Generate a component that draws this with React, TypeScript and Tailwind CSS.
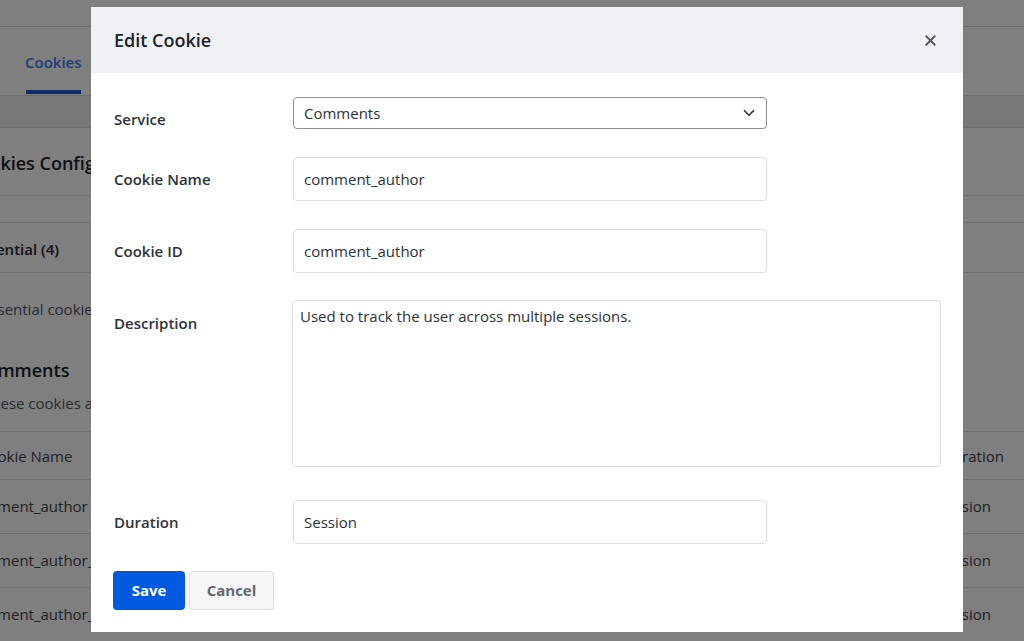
import { X, ChevronDown } from "lucide-react";

const font = { fontFamily: '"Open Sans", "Noto Sans", sans-serif' };

function BgPage() {
  return (
    <div className="w-[1024px] h-[641px] overflow-hidden bg-white text-[#1d2327]">
      <div className="h-[27px] border-b border-[#dcdcde]" />
      <div className="h-[69px] border-b border-[#dcdcde] flex items-end pl-[25px]">
        <div className="flex flex-col items-center">
          <span className="text-[15px] text-[#3b7cf2] font-semibold pb-[17px]">Cookies</span>
          <div className="h-[4px] w-[55px] bg-[#1a5ad0] mb-[1px]" />
        </div>
      </div>
      <div className="h-[32px] bg-[#f0f0f1] border-b border-[#dcdcde]" />
      <div className="h-[68px] border-b border-[#dcdcde] flex items-center pt-[4px] -ml-[33px]">
        <span className="text-[18px] font-semibold">Cookies Configuration</span>
      </div>
      <div className="h-[27px] border-b border-[#dcdcde]" />
      <div className="h-[50px] border-b border-[#dcdcde] flex items-center pt-[4px] -ml-[27px]">
        <span className="text-[15px] font-semibold">Essential (4)</span>
      </div>
      <div className="pt-[25px] -ml-[18px] text-[15px] text-[#50575e]">Essential cookies are required.</div>
      <div className="pt-[36px] -ml-[25px] text-[18px] font-semibold">Comments</div>
      <div className="pt-[8px] -ml-[17px] text-[15px] text-[#50575e]">These cookies are used for comments.</div>
      <div className="mt-[17px] border-t border-[#dcdcde]">
        {[
          ["Cookie Name", "Duration"],
          ["comment_author", "Session"],
          ["comment_author_email", "Session"],
          ["comment_author_url", "Session"],
        ].map(([a, b], i) => (
          <div
            key={i}
            className={`flex items-center border-b border-[#dcdcde] text-[15px] text-[#3c434a] ${i === 0 ? "h-[48px] pt-[2px]" : "h-[54px]"}`}
          >
            <div className={`flex-1 ${i === 0 ? "-ml-[21px]" : "-ml-[33px]"}`}>{a}</div>
            <div className={`shrink-0 ${i === 0 ? "w-[82px]" : "w-[86px]"}`}>{b}</div>
          </div>
        ))}
      </div>
    </div>
  );
}

function Field({ label, value }: { label: string; value: string }) {
  return (
    <div className="flex items-start">
      <label className="w-[179px] shrink-0 pt-[12px] leading-[20px] text-[15px] font-semibold text-[#2c3338]">{label}</label>
      <input
        readOnly
        value={value}
        className="w-[474px] h-[44px] border border-[#dcdcde] rounded-[4px] px-[10px] text-[15px] text-[#2c3338] outline-none"
        style={font}
      />
    </div>
  );
}

export default function App() {
  return (
    <div className="relative w-[1024px] h-[641px] overflow-hidden" style={font}>
      <BgPage />
      <div className="absolute inset-0 bg-black/50" />
      <div className="absolute left-[91px] top-[7px] w-[872px] bg-white">
        <div className="h-[66px] bg-[#f0f1f3] flex items-center justify-between pl-[23px] pr-[24px]">
          <h2 className="text-[18px] font-semibold text-[#1d2327]">Edit Cookie</h2>
          <X size={17} strokeWidth={2.6} className="text-[#50575e]" />
        </div>
        <div className="pl-[23px] pr-[22px] pt-[24px] pb-[22px]">
          <div className="flex items-start h-[32px] mb-[28px]">
            <label className="w-[179px] shrink-0 pt-[12px] leading-[20px] text-[15px] font-semibold text-[#2c3338]">Service</label>
            <div className="w-[474px] h-[32px] border border-[#8c8f94] rounded-[4px] flex items-center justify-between pl-[10px] pr-[8px] text-[15px] text-[#2c3338]">
              <span>Comments</span>
              <ChevronDown size={18} strokeWidth={2.2} className="text-[#2c3338]" />
            </div>
          </div>
          <div className="mb-[28px]">
            <Field label="Cookie Name" value="comment_author" />
          </div>
          <div className="mb-[27px]">
            <Field label="Cookie ID" value="comment_author" />
          </div>
          <div className="flex items-start mb-[33px]">
            <label className="w-[178px] shrink-0 pt-[13px] leading-[20px] text-[15px] font-semibold text-[#2c3338]">Description</label>
            <textarea
              readOnly
              value="Used to track the user across multiple sessions."
              className="w-[649px] h-[167px] border border-[#dcdcde] rounded-[4px] px-[7px] py-[4px] text-[15px] text-[#2c3338] outline-none resize-none"
              style={font}
            />
          </div>
          <div className="mb-[27px]">
            <Field label="Duration" value="Session" />
          </div>
          <div className="flex gap-[4px] -ml-[1px]">
            <button className="w-[72px] h-[39px] bg-[#005ae0] rounded-[4px] text-white font-bold text-[15px]">Save</button>
            <button className="w-[85px] h-[39px] bg-[#f6f6f6] border border-[#dcdcde] rounded-[4px] text-[#646970] font-bold text-[15px]">Cancel</button>
          </div>
        </div>
      </div>
    </div>
  );
}
